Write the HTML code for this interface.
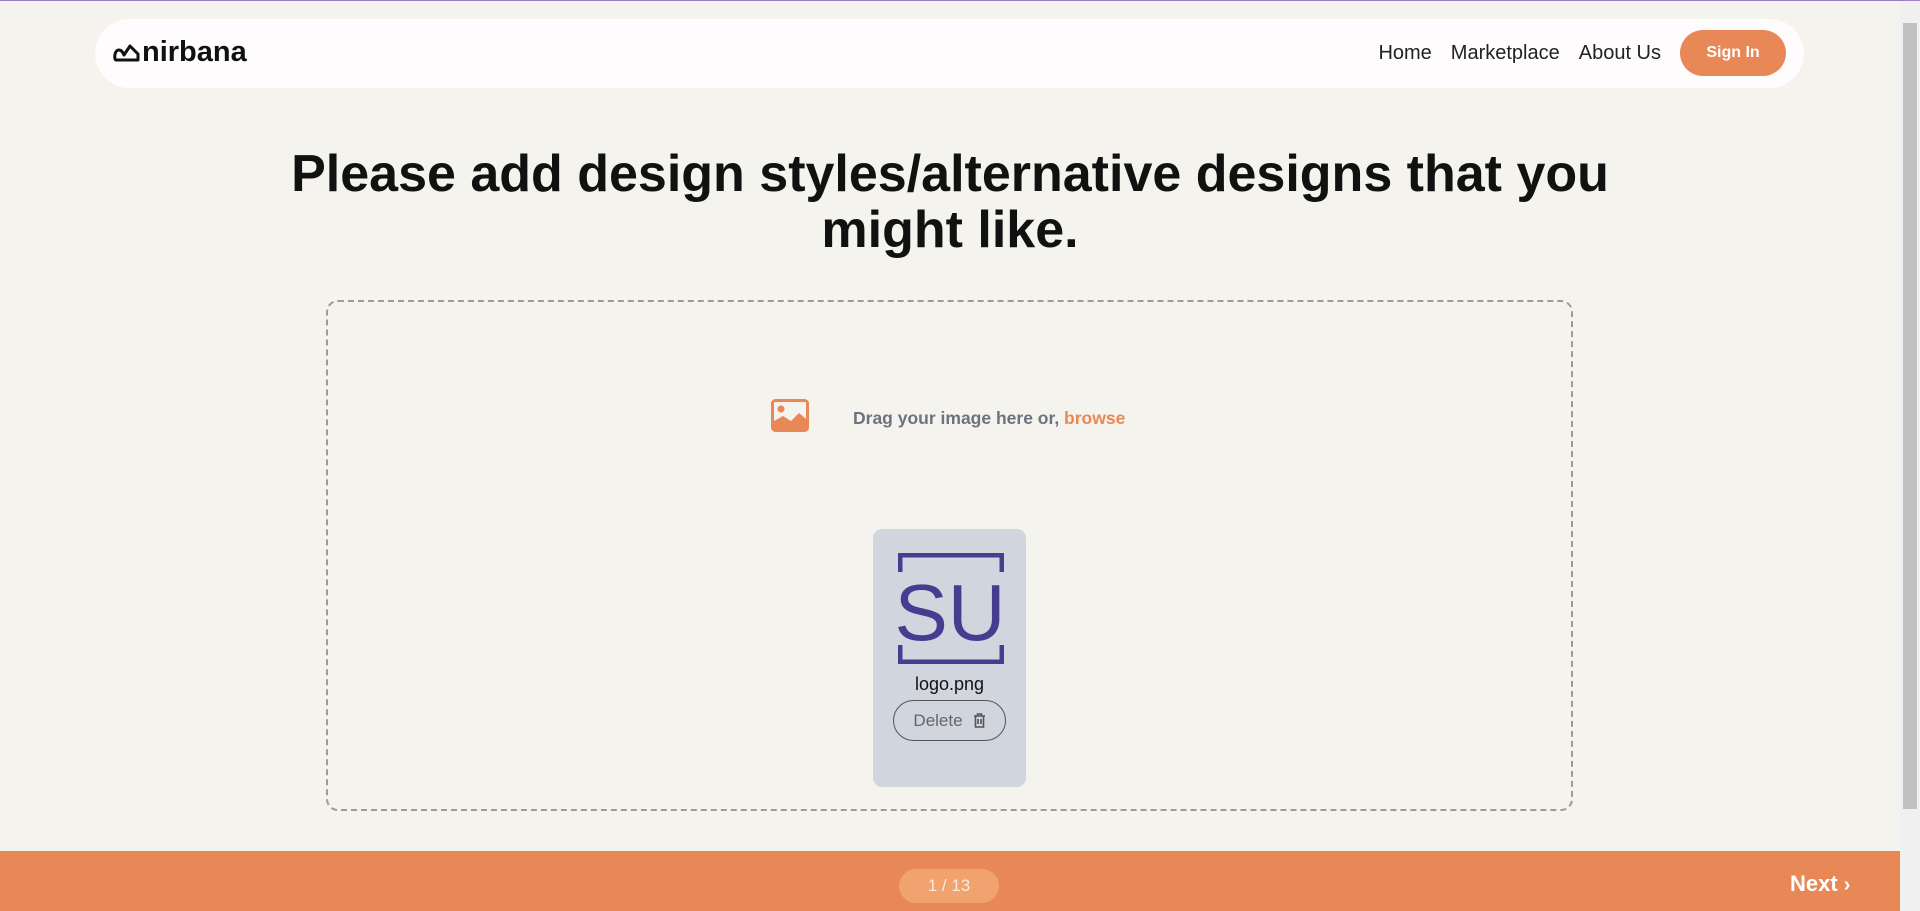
<!DOCTYPE html>
<html><head><meta charset="utf-8"><style>
*{box-sizing:border-box;margin:0;padding:0}
body{width:1920px;height:910px;overflow:hidden;background:#f5f3ee;font-family:"Liberation Sans",sans-serif;position:relative;border-top:1px solid #9b7fc9}
.nav{position:absolute;left:95px;top:18px;width:1709px;height:69px;background:#fefcfd;border-radius:35px}
.logo{position:absolute;left:18px;top:17px;font-size:29px;font-weight:bold;color:#111;display:flex;align-items:center;letter-spacing:0}
.links{position:absolute;right:18px;top:11px;display:flex;align-items:center;font-size:20px;color:#222}
.links span{margin-right:19px}
.btn{background:#e98857;color:#fff;font-size:16px;font-weight:bold;width:106px;height:46px;border-radius:23px;display:flex;align-items:center;justify-content:center;margin-left:0}
h1{position:absolute;left:0;width:1900px;top:145px;text-align:center;font-size:52px;line-height:56px;font-weight:bold;color:#111}
.drop{position:absolute;left:326px;top:299px;width:1247px;height:511px;border:2px dashed #9b9b9b;border-radius:12px}
.drag{position:absolute;left:853px;top:407px;font-size:17.5px;font-weight:bold;color:#6b7280}
.drag b{color:#e98857}
.card{position:absolute;left:873px;top:528px;width:153px;height:258px;background:#d1d5de;border-radius:9px}
.fn{position:absolute;left:0;width:153px;top:145px;text-align:center;font-size:18px;color:#111}
.del{position:absolute;left:20px;top:171px;width:113px;height:41px;border:1.5px solid #555;border-radius:21px;font-size:17px;color:#666;display:flex;align-items:center;justify-content:center;gap:10px}
.foot{position:absolute;left:0;top:850px;width:1900px;height:60px;background:#e98857}
.pill{position:absolute;left:899px;top:18px;width:100px;height:34px;border-radius:17px;background:#f0a36f;color:#fde9dc;font-size:17px;display:flex;align-items:center;justify-content:center}
.next{position:absolute;left:1790px;top:20px;color:#fff;font-size:22px;font-weight:bold}
.sb{position:absolute;left:1900px;top:0;width:20px;height:910px;background:#f0f0f0}
.th{position:absolute;left:1903px;top:22px;width:14px;height:786px;background:#c1c1c1}
</style></head><body>
<div class="nav">
 <div class="logo"><svg width="28" height="22" viewBox="0 0 28 22" style="margin-right:1px"><path d="M3 18 C1 18 1 8 6 8 C9 8 10 11 11 13 L17 4 L25 12 L25 18 Z" fill="none" stroke="#111" stroke-width="3" stroke-linejoin="round"/></svg>nirbana</div>
 <div class="links"><span>Home</span><span>Marketplace</span><span>About Us</span><div class="btn">Sign In</div></div>
</div>
<h1>Please add design styles/alternative designs that you<br>might like.</h1>
<div class="drop"></div>
<svg style="position:absolute;left:771px;top:398px" width="38" height="33" viewBox="0 0 38 33"><rect x="1.5" y="1.5" width="35" height="30" rx="3" fill="none" stroke="#e98857" stroke-width="3"/><circle cx="10" cy="10" r="3.5" fill="#e98857"/><path d="M3 30 L3 22 L12 17 L20 22 L28 14 L35 20 L35 30 Z" fill="#e98857"/></svg>
<div class="drag">Drag your image here or, <b>browse</b></div>
<div class="card">
 <svg style="position:absolute;left:25px;top:24px" width="106" height="111" viewBox="0 0 106 111"><path d="M2 19 V2 H104 V19 M2 92 V109 H104 V92" fill="none" stroke="#463d91" stroke-width="5"/><text x="52" y="87" text-anchor="middle" font-family="Liberation Sans,sans-serif" font-size="80" fill="#463d91">SU</text></svg>
 <div class="fn">logo.png</div>
 <div class="del">Delete <svg width="13" height="15" viewBox="0 0 13 15"><path d="M1 3H12M4.5 3V1H8.5V3M2.5 3V14H10.5V3M5 6V11M8 6V11" fill="none" stroke="#555" stroke-width="1.6"/></svg></div>
</div>
<div class="foot"><div class="pill">1 / 13</div><div class="next">Next <span style="font-size:20px">›</span></div></div>
<div class="sb"></div><div class="th"></div>
</body></html>
